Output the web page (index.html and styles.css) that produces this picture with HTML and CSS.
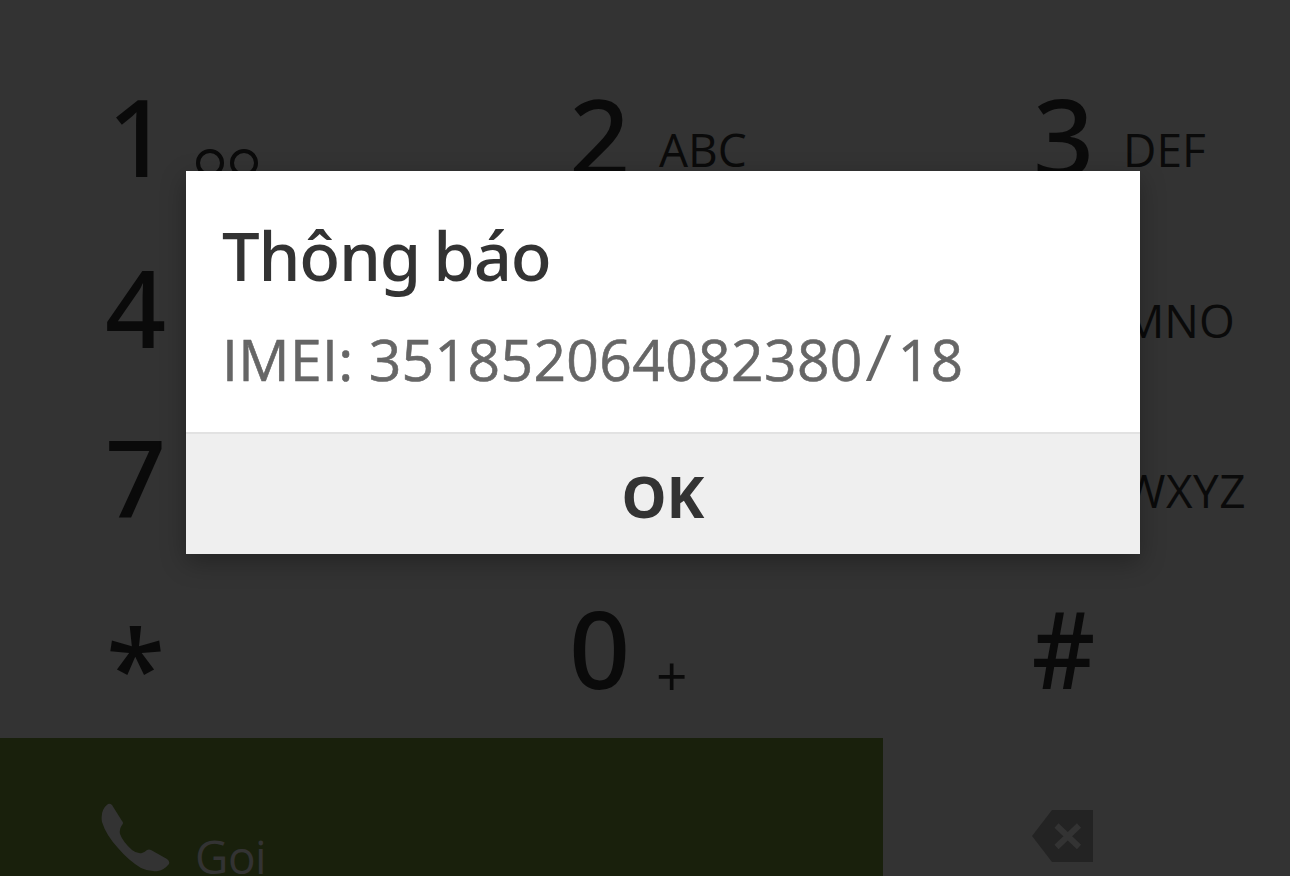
FILE: index.html
```
<!DOCTYPE html>
<html lang="vi">

<head>
    <meta charset="UTF-8">
    <meta name="viewport" content="width=device-width, initial-scale=1.0">
    <title>Thông báo</title>
    <link rel="stylesheet" href="styles.css">
</head>

<body>

    <main class="keypad">
        <div class="key">
            <span class="digit one">1</span>
            <svg class="voicemail" width="64" height="30" viewBox="0 0 64 30">
                <circle cx="15" cy="15" r="12" />
                <circle cx="49" cy="15" r="12" />
            </svg>
        </div>
        <div class="key"><span class="digit">2</span><span class="letters">ABC</span></div>
        <div class="key"><span class="digit">3</span><span class="letters">DEF</span></div>
        <div class="key"><span class="digit">4</span></div>
        <div class="key"></div>
        <div class="key"><span class="digit"></span><span class="letters">MNO</span></div>
        <div class="key"><span class="digit">7</span></div>
        <div class="key"></div>
        <div class="key"><span class="digit"></span><span class="letters wxyz">WXYZ</span></div>
        <div class="key"><span class="digit star">*</span></div>
        <div class="key"><span class="digit">0</span><span class="letters plus">+</span></div>
        <div class="key"><span class="digit hash">#</span></div>
    </main>

    <footer class="actions">
        <div class="call">
            <svg class="phone" width="70" height="70" viewBox="0 0 70 70">
                <path d="M7 1Q9 0 11 2L21 18Q23 20 21 22Q18 26 19 31Q22 39 31 47Q36 51 41 50Q44 49 46 47Q48 46 50 47L66 56Q69 58 68 61Q63 67 57 68Q48 69 40 65Q27 57 17 45Q5 32 1 19Q-1 7 7 1Z" />
            </svg>
            <span class="call-label">Gọi</span>
        </div>
        <div class="erase">
            <svg width="61" height="52" viewBox="0 0 61 52">
                <path class="erase-shape" d="M0 26L20 0H61V52H20Z" />
                <path class="erase-cross" d="M24.500 15.500L47 37M47 15.500L24.500 37" />
            </svg>
        </div>
    </footer>

    <div class="overlay">
        <div class="dialog">
            <div class="dialog-body">
                <h1>Thông báo</h1>
                <p>IMEI: <span class="imei">351852064082380<span class="slash">/</span>18</span></p>
            </div>
            <button class="ok">OK</button>
        </div>
    </div>

</body>

</html>
```
FILE: styles.css
```
* {
    margin: 0;
    padding: 0;
    box-sizing: border-box;
}

body {
    height: 876px;
    overflow: hidden;
    font-family: 'Noto Sans', sans-serif;
    background-color: #333;
    color: #0a0a0a;
}

.keypad {
    display: grid;
    grid-template-columns: 464px 464px 1fr;
    grid-auto-rows: 170.7px;
    height: 738px;
    padding-top: 50px;
}

.key {
    display: flex;
    align-items: flex-start;
    padding-left: 86px;
}

.digit {
    width: 99px;
    margin-right: 10px;
    font-size: 107px;
    font-weight: 500;
    line-height: 172px;
    text-align: center;
}

.one {
    padding-left: 5px;
}

.letters {
    margin-top: 76px;
    font-family: 'Open Sans', sans-serif;
    font-size: 46px;
    line-height: 46px;
}

.wxyz {
    letter-spacing: 0.5px;
}

.voicemail {
    margin-top: 98px;
    fill: none;
    stroke: #0a0a0a;
    stroke-width: 4;
}

.plus {
    margin-top: 85px;
    margin-left: -3px;
    font-size: 55px;
    line-height: 55px;
}

.star {
    padding-top: 19px;
}

.hash {
    transform: scaleX(0.92);
}

.actions {
    display: flex;
    height: 138px;
}

.call {
    display: flex;
    align-items: flex-start;
    width: 883px;
    padding: 65px 0 0 101px;
    background-color: #19200c;
    color: #333;
}

.phone {
    margin-right: 24px;
    fill: #333;
}

.call-label {
    margin-top: 30px;
    font-family: 'Open Sans', sans-serif;
    font-size: 46px;
    line-height: 46px;
    letter-spacing: -0.5px;
}

.erase {
    padding: 72px 0 0 149px;
}

.erase-shape {
    fill: #232323;
}

.erase-cross {
    fill: none;
    stroke: #333;
    stroke-width: 6;
}

.overlay {
    position: fixed;
    inset: 0;
    padding: 171px 150px 0 186px;
}

.dialog {
    height: 383px;
    background-color: #fff;
    box-shadow: 0 8px 24px rgba(0, 0, 0, 0.3);
}

.dialog-body {
    height: 261px;
    padding: 38px 36px 0;
}

.dialog h1 {
    font-size: 67px;
    font-weight: 500;
    line-height: 92px;
    letter-spacing: -1.2px;
    word-spacing: -3px;
    color: #333;
}

.dialog p {
    margin-top: 14px;
    font-family: 'Open Sans', sans-serif;
    font-size: 57px;
    line-height: 88px;
    letter-spacing: 0.35px;
    color: #666;
    white-space: nowrap;
    -webkit-text-stroke: 0.6px #666;
}

.slash {
    display: inline-block;
    margin: 0 7px 0 4px;
    font-size: 64px;
    font-weight: 400;
    line-height: 1;
    transform: skewX(-4deg);
    -webkit-text-stroke: 0;
}

.ok {
    display: block;
    width: 100%;
    height: 122px;
    padding-top: 3px;
    border: none;
    border-top: 2px solid #e2e2e2;
    background-color: #efefef;
    color: #333;
    font-family: inherit;
    font-size: 57px;
    font-weight: 700;
}
```
